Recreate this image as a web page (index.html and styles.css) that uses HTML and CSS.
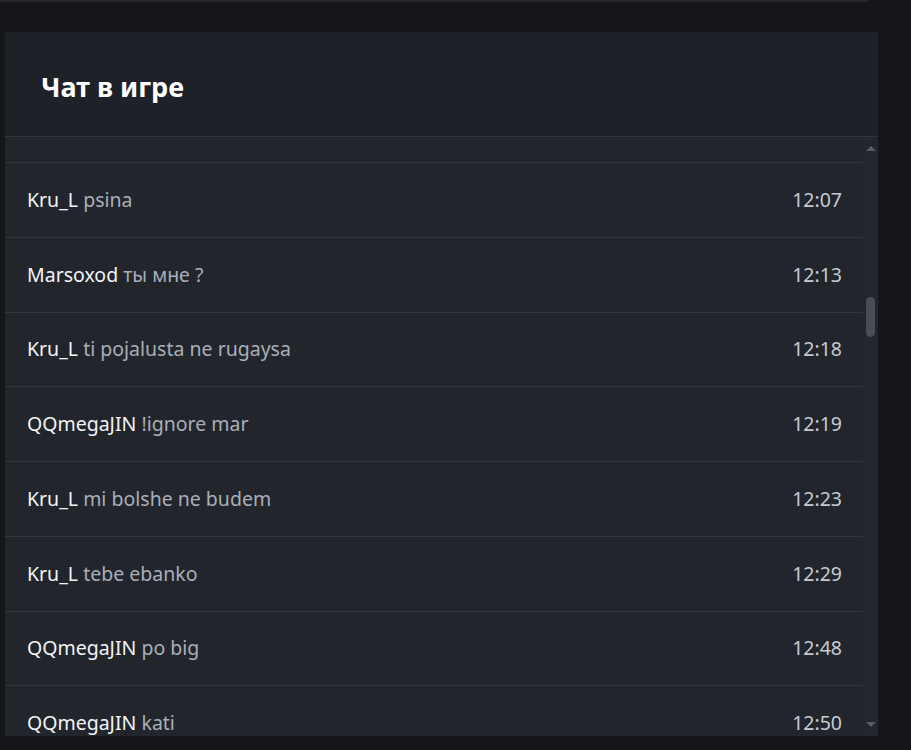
FILE: index.html
```html
<!DOCTYPE html>
<html lang="ru">
<head>
  <meta charset="UTF-8">
  <title>Чат в игре</title>
  <link rel="stylesheet" href="styles.css">
</head>
<body>

  <div class="topline"></div>

  <div class="panel">
    <div class="panel-header">
      <h2>Чат в игре</h2>
    </div>

    <div class="chat">
      <div class="messages">
        <div class="row"><span><b>Kru_L</b> <span class="text">psina</span></span><span class="time">12:07</span></div>
        <div class="row"><span><b>Marsoxod</b> <span class="text">ты мне ?</span></span><span class="time">12:13</span></div>
        <div class="row"><span><b>Kru_L</b> <span class="text">ti pojalusta ne rugaysa</span></span><span class="time">12:18</span></div>
        <div class="row"><span><b>QQmegaJIN</b> <span class="text">!ignore mar</span></span><span class="time">12:19</span></div>
        <div class="row"><span><b>Kru_L</b> <span class="text">mi bolshe ne budem</span></span><span class="time">12:23</span></div>
        <div class="row"><span><b>Kru_L</b> <span class="text">tebe ebanko</span></span><span class="time">12:29</span></div>
        <div class="row"><span><b>QQmegaJIN</b> <span class="text">po big</span></span><span class="time">12:48</span></div>
        <div class="row"><span><b>QQmegaJIN</b> <span class="text">kati</span></span><span class="time">12:50</span></div>
      </div>

      <div class="scrollbar">
        <div class="arrow arrow-up"></div>
        <div class="track"><div class="thumb"></div></div>
        <div class="arrow arrow-down"></div>
      </div>
    </div>
  </div>

</body>
</html>
```

FILE: styles.css
```css
body {
  margin: 0;
  background: #15161a;
  font-family: 'Noto Sans', 'Open Sans', sans-serif;
  color: #f0f2f5;
}
.topline {
  width: 868px;
  height: 2px;
  background: #25272c;
}
.panel {
  width: 873px;
  height: 704px;
  margin: 30px 0 0 5px;
  background: #1f2129;
  display: flex;
  flex-direction: column;
}
.panel-header {
  height: 105px;
  padding: 4px 36px 0;
  box-sizing: border-box;
  display: flex;
  align-items: center;
  border-bottom: 1px solid #33363d;
  flex-shrink: 0;
}
h2 {
  margin: 0;
  font-size: 27px;
  font-weight: bold;
  color: #ffffff;
}
.chat {
  flex: 1;
  min-height: 0;
  display: flex;
}
.messages {
  flex: 1;
  overflow: hidden;
  padding-top: 25px;
  background: #22252b;
}
.row {
  height: 72.75px;
  border-top: 1px solid #34373e;
  padding: 0 21px 1px 22px;
  display: flex;
  align-items: center;
  justify-content: space-between;
  font-size: 19.5px;
}
.row b {
  font-weight: normal;
  color: #f2f4f7;
}
.text {
  color: #a9afb8;
}
.time {
  color: #c6cbd2;
}
.scrollbar {
  width: 15px;
  background: #23262d;
  display: flex;
  flex-direction: column;
  align-items: center;
}
.arrow {
  width: 0;
  height: 0;
  border-left: 5px solid transparent;
  border-right: 5px solid transparent;
}
.arrow-up {
  margin-top: 9px;
  border-bottom: 5px solid #5a5d65;
}
.arrow-down {
  margin-bottom: 9px;
  border-top: 5px solid #5a5d65;
}
.track {
  flex: 1;
  width: 100%;
  display: flex;
  justify-content: center;
}
.thumb {
  width: 9px;
  height: 40px;
  margin-top: 146px;
  border-radius: 5px;
  background: #4a4d55;
}
```
